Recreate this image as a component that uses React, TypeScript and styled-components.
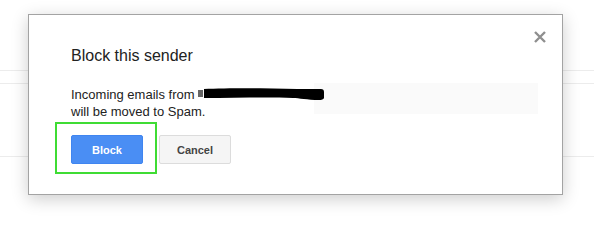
import React from 'react'
import styled, { createGlobalStyle } from 'styled-components'

const GlobalStyle = createGlobalStyle`
  html, body {
    margin: 0;
    padding: 0;
    background: #fff;
  }
  body {
    font-family: "Liberation Sans", Arial, sans-serif;
  }
`

const Page = styled.div`
  position: relative;
  width: 594px;
  height: 228px;
  overflow: hidden;
  background: #fff;
`

const BackRow = styled.div<{ $h: number }>`
  height: ${(p) => p.$h}px;
  border-bottom: 1px solid #ececec;
`

// modal sits over the list rows behind it
const Dialog = styled.div`
  position: absolute;
  left: 28px;
  top: 14px;
  width: 535px;
  box-sizing: border-box;
  background: #fff;
  border: 1px solid #a3a3a3;
  box-shadow: 0 4px 16px rgba(0, 0, 0, 0.2);
  padding: 31px 42px 30px 42px;
`

const Close = styled.button`
  position: absolute;
  top: 16px;
  right: 16px;
  width: 12px;
  height: 12px;
  padding: 0;
  border: 0;
  background: none;
  cursor: pointer;
  display: flex;
`

const Title = styled.h2`
  margin: 0;
  font-size: 16px;
  line-height: 20px;
  font-weight: normal;
  color: #222;
`

const Body = styled.div`
  position: relative;
  margin-top: 20px;
  font-size: 13px;
  line-height: 17px;
  color: #222;
`

const Scribble = styled.svg`
  position: absolute;
  left: 126px;
  top: 0;
`

const Smudge = styled.div`
  position: absolute;
  left: 243px;
  top: -3px;
  width: 224px;
  height: 31px;
  background: #fafafa;
`

const Actions = styled.div`
  display: flex;
  gap: 16px;
  margin-top: 15px;
`

const Highlight = styled.div`
  position: relative;
  display: flex;
  &::after {
    content: '';
    position: absolute;
    left: -16px;
    top: -13px;
    right: -14px;
    bottom: -10px;
    border: 2px solid #3fdc34;
    pointer-events: none;
  }
`

const Button = styled.button<{ $primary?: boolean }>`
  min-width: 72px;
  height: 29px;
  padding: 0 8px;
  border-radius: 2px;
  font-family: "Liberation Sans", Arial, sans-serif;
  font-size: 11px;
  font-weight: bold;
  cursor: pointer;
  border: 1px solid ${(p) => (p.$primary ? '#3f85f0' : '#dcdcdc')};
  background: ${(p) => (p.$primary ? '#4a8ef4' : '#f5f5f5')};
  color: ${(p) => (p.$primary ? '#fff' : '#444')};
`

function App() {
  return (
    <Page>
      <GlobalStyle />
      <BackRow $h={70} />
      <BackRow $h={12} />
      <BackRow $h={72} />

      <Dialog>
        <Close aria-label='Close'>
          <svg width='12' height='12' viewBox='0 0 12 12'>
            <path d='M1 1 L11 11 M11 1 L1 11' stroke='#8f8f8f' strokeWidth='2.4' />
          </svg>
        </Close>
        <Title>Block this sender</Title>
        <Body>
          Incoming emails from
          <br />
          will be moved to Spam.
          <Smudge />
          <Scribble width='130' height='16' viewBox='0 0 130 16'>
            <path d='M1 4 L6 4 L6 11 L1 11 Z' fill='#666' />
            <path
              d='M7 3 C 30 2, 70 2, 100 3 L 124 3 Q 127 3 127 6 L 127 12 Q 126 14 122 14 C 110 14, 102 12, 96 12 C 70 11, 35 12, 7 12 Z'
              fill='#000'
            />
          </Scribble>
        </Body>
        <Actions>
          <Highlight>
            <Button $primary>Block</Button>
          </Highlight>
          <Button>Cancel</Button>
        </Actions>
      </Dialog>
    </Page>
  )
}

export default App
